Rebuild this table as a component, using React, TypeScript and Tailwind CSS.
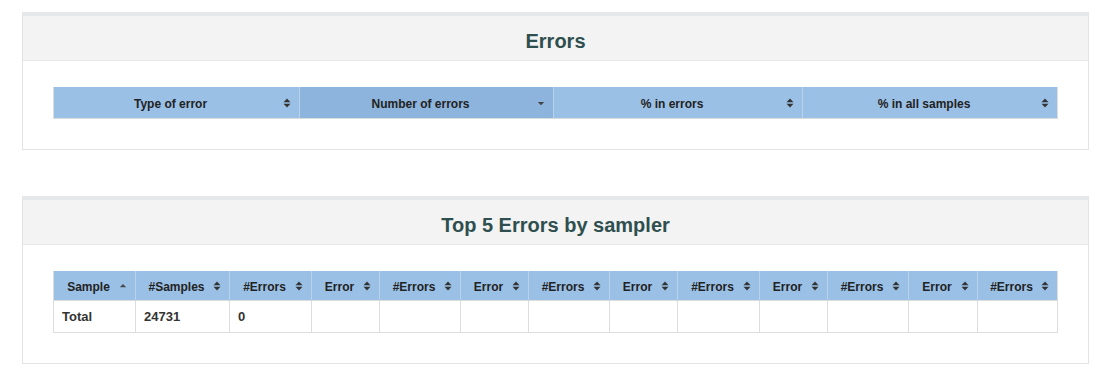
import React from "react";

type Sort = "both" | "asc" | "desc";

function SortIcon({ sort }: { sort: Sort }) {
  return (
    <svg
      width="8"
      height="10"
      viewBox="0 0 8 10"
      className="absolute right-[8px] top-1/2 -translate-y-1/2 mt-[1px]"
    >
      {sort === "both" && (
        <>
          <polygon points="0.5,4.3 4,0.6 7.5,4.3" fill="#333" />
          <polygon points="0.5,5.7 4,9.4 7.5,5.7" fill="#333" />
        </>
      )}
      {sort === "asc" && <polygon points="0.8,6.2 4,3 7.2,6.2" fill="#4a4a4a" />}
      {sort === "desc" && <polygon points="0.8,4 4,7.2 7.2,4" fill="#444" />}
    </svg>
  );
}

function Panel({ title, className = "", children }: { title: string; className?: string; children: React.ReactNode }) {
  return (
    <div className={`w-[1067px] border border-[#e3e3e3] border-t-[4px] border-t-[#e6e9ec] bg-white ${className}`}>
      <div className="bg-[#f3f3f3] pt-[14px] pb-[8px] border-b border-[#e8e8e8] text-center">
        <h2 className="text-[20px] leading-[22px] font-bold text-[#2f4f4f]">{title}</h2>
      </div>
      <div className="px-[30px] pt-[26px] pb-[30px]">{children}</div>
    </div>
  );
}

const errorCols: { label: string; width: number; sort: Sort }[] = [
  { label: "Type of error", width: 246, sort: "both" },
  { label: "Number of errors", width: 254, sort: "desc" },
  { label: "% in errors", width: 249, sort: "both" },
  { label: "% in all samples", width: 255, sort: "both" },
];

const topCols: { label: string; width: number; sort: Sort }[] = [
  { label: "Sample", width: 82, sort: "asc" },
  { label: "#Samples", width: 94, sort: "both" },
  { label: "#Errors", width: 82, sort: "both" },
  { label: "Error", width: 68, sort: "both" },
  { label: "#Errors", width: 81, sort: "both" },
  { label: "Error", width: 68, sort: "both" },
  { label: "#Errors", width: 81, sort: "both" },
  { label: "Error", width: 68, sort: "both" },
  { label: "#Errors", width: 82, sort: "both" },
  { label: "Error", width: 68, sort: "both" },
  { label: "#Errors", width: 81, sort: "both" },
  { label: "Error", width: 69, sort: "both" },
  { label: "#Errors", width: 80, sort: "both" },
];

const totalRow = ["Total", "24731", "0", "", "", "", "", "", "", "", "", "", ""];

export default function App() {
  return (
    <div className="min-h-[370px] bg-white pt-[12px] pl-[22px] font-['Liberation_Sans',Arial,sans-serif]">
      {/* Errors */}
      <Panel title="Errors">
        <table className="w-[1004px] table-fixed border-collapse">
          <colgroup>
            {errorCols.map((c, i) => (
              <col key={i} style={{ width: c.width }} />
            ))}
          </colgroup>
          <thead>
            <tr className="h-[31px]">
              {errorCols.map((c, i) => (
                <th
                  key={i}
                  className={`relative pl-[10px] pr-[22px] pt-[3px] text-center text-[12px] font-bold text-[#222] border-b border-b-[#dcdcdc] ${
                    i === 0 ? "border-l border-l-[#dcdcdc]" : "border-l border-l-[#b9d2ec]"
                  } ${i === errorCols.length - 1 ? "border-r border-r-[#dcdcdc]" : ""} ${
                    c.sort === "desc" ? "bg-[#8db4dc]" : "bg-[#9ac0e6]"
                  }`}
                >
                  {c.label}
                  <SortIcon sort={c.sort} />
                </th>
              ))}
            </tr>
          </thead>
        </table>
      </Panel>

      {/* Top 5 errors by sampler */}
      <Panel title="Top 5 Errors by sampler" className="mt-[46px]">
        <table className="w-[1004px] table-fixed border-collapse">
          <colgroup>
            {topCols.map((c, i) => (
              <col key={i} style={{ width: c.width }} />
            ))}
          </colgroup>
          <thead>
            <tr className="h-[30px]">
              {topCols.map((c, i) => (
                <th
                  key={i}
                  className={`relative pl-[10px] pr-[22px] pt-[3px] text-center text-[12px] font-bold text-[#222] whitespace-nowrap bg-[#9ac0e6] ${
                    i === 0 ? "border-l border-l-[#dcdcdc]" : "border-l border-l-[#b9d2ec]"
                  } ${i === topCols.length - 1 ? "border-r border-r-[#dcdcdc]" : ""}`}
                >
                  {c.label}
                  <SortIcon sort={c.sort} />
                </th>
              ))}
            </tr>
          </thead>
          <tbody>
            <tr className="h-[32px]">
              {totalRow.map((v, i) => (
                <td
                  key={i}
                  className="px-[8px] text-left text-[13px] font-bold text-[#333] border border-[#dddddd]"
                >
                  {v}
                </td>
              ))}
            </tr>
          </tbody>
        </table>
      </Panel>
    </div>
  );
}
